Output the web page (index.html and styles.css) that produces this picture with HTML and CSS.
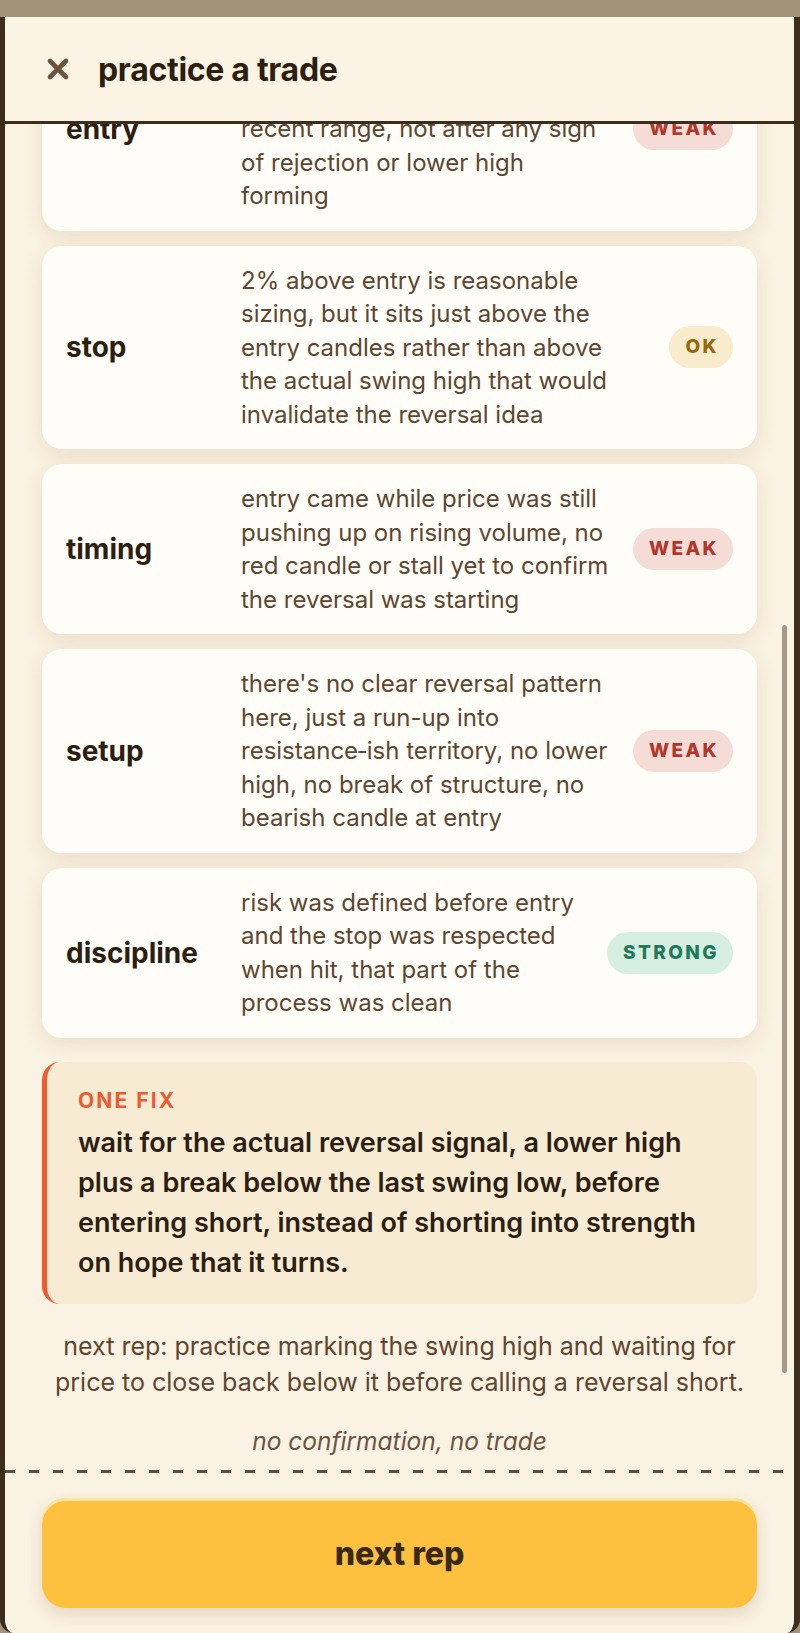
FILE: index.html
```html
<!DOCTYPE html>
<html lang="en">
<head>
  <meta charset="UTF-8">
  <meta name="viewport" content="width=device-width, initial-scale=1.0">
  <title>practice a trade</title>
  <link rel="stylesheet" href="styles.css">
</head>
<body>

<div class="sheet">
  <header class="sheet-header">
    <button class="close-btn" aria-label="close">
      <svg width="24" height="24" viewBox="0 0 24 24">
        <path d="M4 4 L20 20 M20 4 L4 20" stroke="currentColor" stroke-width="4.6" stroke-linecap="round" fill="none"/>
      </svg>
    </button>
    <h1 class="sheet-title">practice a trade</h1>
  </header>

  <div class="sheet-body">
    <div class="review">
      <div class="score-list">
        <div class="score-card">
          <div class="score-label">entry</div>
          <div class="score-note">shorted while price was still pushing hard into the top of the recent range, not after any sign of rejection or lower high forming</div>
          <span class="badge badge-weak">weak</span>
        </div>
        <div class="score-card">
          <div class="score-label">stop</div>
          <div class="score-note">2% above entry is reasonable sizing, but it sits just above the entry candles rather than above the actual swing high that would invalidate the reversal idea</div>
          <span class="badge badge-ok">ok</span>
        </div>
        <div class="score-card">
          <div class="score-label">timing</div>
          <div class="score-note">entry came while price was still pushing up on rising volume, no red candle or stall yet to confirm the reversal was starting</div>
          <span class="badge badge-weak">weak</span>
        </div>
        <div class="score-card">
          <div class="score-label">setup</div>
          <div class="score-note">there's no clear reversal pattern here, just a run-up into resistance&#8209;ish territory, no lower high, no break of structure, no bearish candle at entry</div>
          <span class="badge badge-weak">weak</span>
        </div>
        <div class="score-card">
          <div class="score-label">discipline</div>
          <div class="score-note">risk was defined before entry and the stop was respected when hit, that part of the process was clean</div>
          <span class="badge badge-strong">strong</span>
        </div>
      </div>

      <div class="one-fix">
        <div class="one-fix-label">one fix</div>
        <p class="one-fix-text">wait for the actual reversal signal, a lower high plus a break below the last swing low, before entering short, instead of shorting into strength on hope that it turns.</p>
      </div>

      <p class="next-rep">next rep: practice marking the swing high and waiting for price to close back below it before calling a reversal short.</p>
      <p class="motto">no confirmation, no trade</p>
    </div>
    <div class="scroll-thumb"></div>
  </div>

  <footer class="sheet-footer">
    <button class="next-btn">next rep</button>
  </footer>
</div>

</body>
</html>
```

FILE: styles.css
```css
/* page */
body {
  margin: 0;
  background: #a39479;
  font-family: "Inter", "Noto Sans", sans-serif;
  color: #2c1e11;
}
/* bottom sheet */
.sheet {
  margin-top: 17px;
  height: 1616px;
  display: flex;
  flex-direction: column;
  background: #faf2e2;
  border-left: 5px solid #3c2d1f;
  border-right: 6px solid #3c2d1f;
  border-radius: 0 0 14px 14px;
  overflow: hidden;
}
/* header */
.sheet-header {
  flex: 0 0 104px;
  display: flex;
  align-items: center;
  gap: 28px;
  padding: 0 41px;
  background: #fbf3e3;
  border-bottom: 3px solid #3c2d1f;
  position: relative;
  z-index: 2;
}
.close-btn {
  display: flex;
  padding: 0;
  border: none;
  background: none;
  color: #6a543e;
  cursor: pointer;
}
.sheet-title {
  margin: 0;
  font-size: 32px;
  font-weight: 700;
  letter-spacing: -0.3px;
  color: #2c1e11;
}
/* scrolling content */
.sheet-body {
  flex: 1;
  position: relative;
  overflow: hidden;
}
.review {
  margin-top: -97px; /* scrolled position */
  padding: 0 37px;
}
.score-list {
  display: flex;
  flex-direction: column;
  gap: 15px;
}
.score-card {
  display: flex;
  align-items: center;
  gap: 18px;
  padding: 18px 24px;
  background: #fffdf8;
  border-radius: 20px;
  box-shadow: 0 6px 20px rgba(120, 85, 30, 0.12);
}
.score-label {
  flex: 0 0 157px;
  font-size: 28px;
  font-weight: 700;
  color: #2c1e11;
}
.score-note {
  flex: 1;
  max-width: 378px;
  font-size: 24px;
  line-height: 33.5px;
  color: #5e4630;
}
.badge {
  flex-shrink: 0;
  margin-left: auto;
  padding: 10px 14px 10px 16px;
  border-radius: 21px;
  font-size: 19px;
  line-height: 22px;
  font-weight: 800;
  letter-spacing: 2.4px;
  text-transform: uppercase;
}
.badge-weak {
  background: #f6dcd6;
  color: #b2372b;
}
.badge-ok {
  background: #f8eccd;
  color: #98680f;
}
.badge-strong {
  background: #d6efe1;
  color: #22795a;
}
/* one fix box */
.one-fix {
  margin-top: 24px;
  padding: 28px 30px 21px 31px;
  background: #f7ebd3;
  border-left: 5px solid #ef5a2f;
  border-radius: 18px;
}
.one-fix-label {
  font-size: 21px;
  line-height: 22px;
  font-weight: 700;
  letter-spacing: 2.1px;
  text-transform: uppercase;
  color: #ee5a30;
}
.one-fix-text {
  margin: 11px 0 0;
  font-size: 27px;
  line-height: 40px;
  font-weight: 600;
  color: #2c1e11;
}
.next-rep {
  margin: 24px 0 0;
  text-align: center;
  font-size: 25px;
  line-height: 36px;
  color: #5e4630;
}
.motto {
  margin: 23px 0 0;
  text-align: center;
  font-size: 24.5px;
  line-height: 36px;
  font-style: italic;
  color: #6a5542;
}
.scroll-thumb {
  position: absolute;
  top: 501px;
  right: 7px;
  width: 5px;
  height: 748px;
  border-radius: 3px;
  background: #a39a8b;
}
/* footer */
.sheet-footer {
  flex: 0 0 auto;
  padding: 28px 37px 25px;
  background: #faf2e2 repeating-linear-gradient(90deg, #5e4b38 0 10px, transparent 10px 24px) top left / 100% 3px no-repeat;
}
.next-btn {
  display: block;
  width: 100%;
  height: 110px;
  border: none;
  border-radius: 24px;
  background: #fdc13f;
  box-shadow: inset 0 3px 0 rgba(255, 236, 180, 0.8), 0 6px 16px rgba(90, 60, 15, 0.15);
  font-family: inherit;
  font-size: 32px;
  font-weight: 800;
  color: #3a2917;
  cursor: pointer;
}
```
